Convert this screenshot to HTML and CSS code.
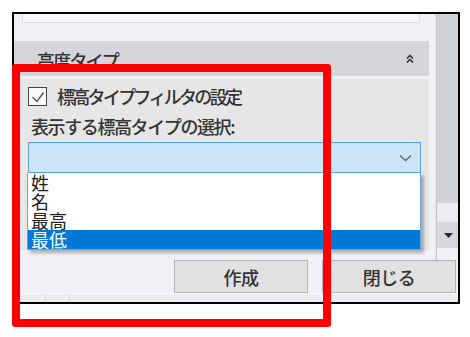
FILE: index.html
```html
<!DOCTYPE html>
<html lang="ja">
<head>
<meta charset="utf-8">
<link rel="stylesheet" href="styles.css">
</head>
<body>
<div class="frame">
  <div class="upper">
    <div class="main">
      <div class="topbox"></div>
      <div class="header">
        <span class="header-title">高度タイプ</span>
        <svg class="collapse" width="8" height="10" viewBox="0 0 8 10"><path d="M1 4.5 L4 1.5 L7 4.5 M1 8.5 L4 5.5 L7 8.5" fill="none" stroke="#333" stroke-width="1.6"/></svg>
      </div>
      <div class="content">
        <div class="check-row">
          <span class="checkbox"><svg width="17" height="17" viewBox="0 0 17 17"><path d="M3.5 9 L8 13.5 L14.5 4.5" fill="none" stroke="#555" stroke-width="1.4"/></svg></span>
          <span class="check-label">標高タイプフィルタの設定</span>
        </div>
        <div class="label2">表示する標高タイプの選択:</div>
        <div class="combo">
          <svg class="combo-arrow" width="13" height="8" viewBox="0 0 13 8"><path d="M1 1.5 L6.5 6.5 L12 1.5" fill="none" stroke="#666" stroke-width="1.5"/></svg>
        </div>
        <ul class="list">
          <li class="item">姓</li>
          <li class="item">名</li>
          <li class="item">最高</li>
          <li class="item selected">最低</li>
        </ul>
      </div>
    </div>
    <div class="vscroll">
      <div class="thumb"></div>
      <div class="track"></div>
      <div class="sbtn"><svg width="9" height="5" viewBox="0 0 9 5"><path d="M0 0 H9 L4.5 5 Z" fill="#2b2b2b"/></svg></div>
      <div class="sfill"></div>
    </div>
  </div>
  <div class="buttons">
    <button class="btn">作成</button>
    <button class="btn">閉じる</button>
  </div>
  <div class="status"><span class="sep s1"></span><span class="sep s2"></span></div>
</div>
<div class="highlight"></div>
</body>
</html>
```
FILE: styles.css
```css
* { box-sizing: border-box; }
html, body { margin: 0; padding: 0; background: #fff; }
body {
  font-family: "Noto Sans CJK JP", "Noto Sans", sans-serif;
  color: #333;
  width: 470px;
  height: 337px;
  position: relative;
  overflow: hidden;
}
.frame {
  margin: 12px 0 0 12px;
  width: 448px;
  height: 292px;
  border: 2px solid #000;
  display: flex;
  flex-direction: column;
  background: #f1f1f5;
}
.upper { display: flex; height: 246px; }
.main {
  width: 422px;
  display: flex;
  flex-direction: column;
  background: #f1f1f5;
  border-right: 1px solid #e4e4e8;
}
.topbox {
  height: 9px;
  margin: 0 15px 0 8px;
  background: #f8f8fa;
  border: 1px solid #dcdce2;
  border-top: none;
}
.header {
  margin-top: 18px;
  height: 35px;
  width: 415px;
  background: #d5d5dc;
  display: flex;
  align-items: center;
  justify-content: space-between;
  padding: 0 15px 0 23px;
}
.header-title {
  font-size: 18px;
  font-weight: 500;
  letter-spacing: -1.8px;
  color: #333;
  line-height: 1;
  margin-top: 2px;
}
.collapse { display: block; }
.content {
  margin-top: 3px;
  margin-left: 5px;
  width: 410px;
  height: 171px;
  background: #e6e6e6;
  display: flex;
  flex-direction: column;
}
.check-row {
  margin-top: 7px;
  height: 20px;
  display: flex;
  align-items: center;
  padding-left: 9px;
}
.checkbox {
  width: 19px;
  height: 19px;
  border: 1px solid #444;
  background: #fafafa;
  display: flex;
}
.check-label {
  margin-left: 10px;
  font-size: 18px;
  font-weight: 500;
  letter-spacing: -2.7px;
  line-height: 20px;
}
.label2 {
  margin-top: 9px;
  padding-left: 12px;
  font-size: 18px;
  font-weight: 500;
  letter-spacing: -1.4px;
  line-height: 22px;
}
.combo {
  margin: 5px 0 0 9px;
  width: 393px;
  height: 31px;
  background: #cce4f7;
  border: 1px solid #5b9fe2;
  display: flex;
  align-items: center;
  justify-content: flex-end;
  padding-right: 8px;
}
.combo-arrow { display: block; }
.list {
  list-style: none;
  margin: 0 0 0 8px;
  padding: 0;
  width: 394px;
  background: #fff;
  border: 1px solid #6aa6e4;
  border-top: none;
  box-shadow: 3px 3px 3px rgba(0,0,0,0.28);
}
.item {
  height: 19px;
  line-height: 19px;
  font-size: 18px;
  padding-left: 3px;
  color: #222;
}
.item.selected { background: #0078d7; color: #fff; }
.vscroll {
  width: 22px;
  display: flex;
  flex-direction: column;
  border-left: 1px solid #c4c4cc;
}
.thumb { height: 189px; background: #d0d0d7; }
.track { height: 19px; background: #eeeef2; }
.sbtn {
  height: 26px;
  background: #d6d6dc;
  display: flex;
  align-items: center;
  justify-content: center;
}
.sbtn svg { display: block; margin-left: 1px; }
.sfill { flex: 1; background: #f1f1f5; }
.buttons {
  height: 33px;
  display: flex;
  gap: 14px;
  padding-left: 160px;
  background: #f1f1f5;
}
.btn {
  width: 134px;
  height: 33px;
  background: #e1e1e1;
  border: 1px solid #b4b4b4;
  font-family: "Noto Sans CJK JP", "Noto Sans", sans-serif;
  font-size: 18px;
  font-weight: 500;
  color: #333;
  padding: 0;
  letter-spacing: -0.5px;
}
.status {
  flex: 1;
  background: #ededf0;
  border-top: 1px solid #f8f8fa;
  display: flex;
}
.sep { width: 1px; background: #dcdce0; height: 100%; }
.s1 { margin-left: 31px; }
.s2 { margin-left: 23px; }
.highlight {
  position: absolute;
  left: 12px;
  top: 64px;
  width: 319px;
  height: 263px;
  border: 8px solid #ff0000;
  border-radius: 3px;
}
```
